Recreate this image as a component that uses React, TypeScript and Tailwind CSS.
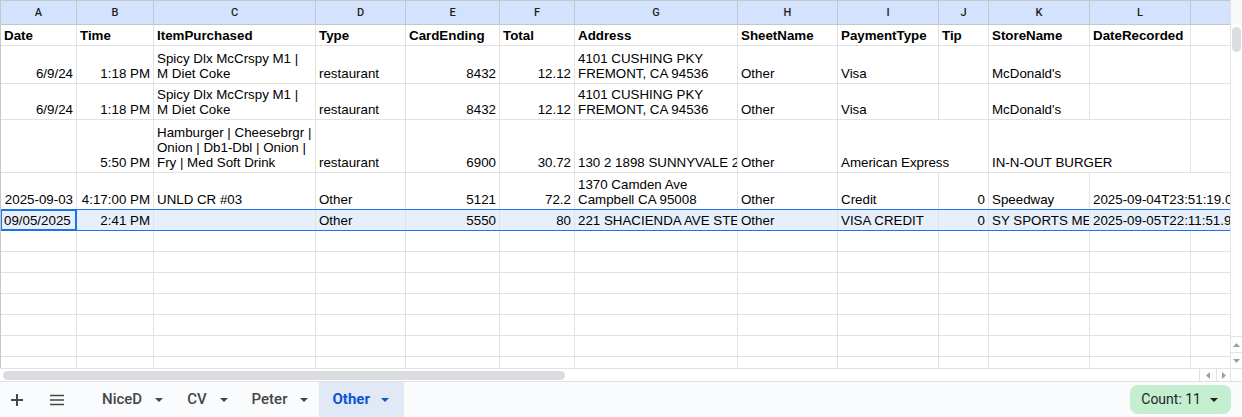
import React from "react";

type Cell = { t?: string | string[]; r?: boolean; ov?: boolean; active?: boolean };
type Row = { h: number; bold?: boolean; sel?: boolean; blueBottom?: boolean; cells: Cell[] };

const COLS = [76, 77, 162, 90, 94, 75, 163, 100, 101, 50, 101, 101];
const LETTERS = ["A", "B", "C", "D", "E", "F", "G", "H", "I", "J", "K", "L"];

const L = (t: string | string[]): Cell => ({ t });
const R = (t: string): Cell => ({ t, r: true });
const E: Cell = {};

const ROWS: Row[] = [
  {
    h: 21,
    bold: true,
    cells: [
      "Date",
      "Time",
      "ItemPurchased",
      "Type",
      "CardEnding",
      "Total",
      "Address",
      "SheetName",
      "PaymentType",
      "Tip",
      "StoreName",
      "DateRecorded",
    ].map((s) => L(s)),
  },
  {
    h: 38,
    cells: [
      R("6/9/24"),
      R("1:18 PM"),
      L(["Spicy Dlx McCrspy M1 |", "M Diet Coke"]),
      L("restaurant"),
      R("8432"),
      R("12.12"),
      L(["4101 CUSHING PKY", "FREMONT, CA 94536"]),
      L("Other"),
      L("Visa"),
      E,
      L("McDonald's"),
      E,
    ],
  },
  {
    h: 36,
    cells: [
      R("6/9/24"),
      R("1:18 PM"),
      L(["Spicy Dlx McCrspy M1 |", "M Diet Coke"]),
      L("restaurant"),
      R("8432"),
      R("12.12"),
      L(["4101 CUSHING PKY", "FREMONT, CA 94536"]),
      L("Other"),
      L("Visa"),
      E,
      L("McDonald's"),
      E,
    ],
  },
  {
    h: 53,
    cells: [
      E,
      R("5:50 PM"),
      L(["Hamburger | Cheesebrgr |", "Onion | Db1-Dbl | Onion |", "Fry | Med Soft Drink"]),
      L("restaurant"),
      R("6900"),
      R("30.72"),
      L("130 2 1898 SUNNYVALE 2"),
      L("Other"),
      { t: "American Express", ov: true },
      E,
      { t: "IN-N-OUT BURGER", ov: true },
      E,
    ],
  },
  {
    h: 37,
    blueBottom: true,
    cells: [
      R("2025-09-03"),
      R("4:17:00 PM"),
      L("UNLD CR #03"),
      L("Other"),
      R("5121"),
      R("72.2"),
      L(["1370 Camden Ave", "Campbell CA 95008"]),
      L("Other"),
      L("Credit"),
      R("0"),
      L("Speedway"),
      { t: "2025-09-04T23:51:19.000Z", ov: true },
    ],
  },
  {
    h: 21,
    sel: true,
    blueBottom: true,
    cells: [
      { t: "09/05/2025", active: true },
      R("2:41 PM"),
      E,
      L("Other"),
      R("5550"),
      R("80"),
      L("221 SHACIENDA AVE STE"),
      L("Other"),
      L("VISA CREDIT"),
      R("0"),
      L("SY SPORTS MED"),
      { t: "2025-09-05T22:11:51.900Z", ov: true },
    ],
  },
];

function GridCell({ c, w, bold }: { c: Cell; w: number; bold?: boolean }) {
  const lines = c.t === undefined ? [] : Array.isArray(c.t) ? c.t : [c.t];
  const clip = !c.ov && !c.active;
  return (
    <div
      className={
        "relative flex shrink-0 flex-col justify-end px-[3px] pb-[2px] " +
        (c.ov ? "" : "border-r border-[#e2e2e2] ") +
        (clip ? "overflow-hidden " : "") +
        (c.r ? "items-end " : "items-start ") +
        (bold ? "font-bold " : "")
      }
      style={{ width: w }}
    >
      {lines.map((l, i) => (
        <div key={i} className="whitespace-nowrap leading-[normal]">
          {l}
        </div>
      ))}
      {c.active && (
        <div className="pointer-events-none absolute left-[-1px] top-[-1px] h-[22px] w-[77px] border-2 border-[#1a73e8]" />
      )}
    </div>
  );
}

function DataRow({ row }: { row: Row }) {
  return (
    <div
      className={
        "flex shrink-0 border-b " +
        (row.blueBottom ? "border-[#1a73e8] " : "border-[#e2e2e2] ") +
        (row.sel ? "bg-[#e7effd]" : "")
      }
      style={{ height: row.h }}
    >
      {COLS.map((w, i) => (
        <GridCell key={i} c={row.cells[i]} w={w} bold={row.bold} />
      ))}
      <div className="flex-1" />
    </div>
  );
}

function EmptyRow() {
  return (
    <div className="flex h-[21px] shrink-0 border-b border-[#e2e2e2]">
      {COLS.map((w, i) => (
        <div key={i} className="shrink-0 border-r border-[#e2e2e2]" style={{ width: w }} />
      ))}
      <div className="flex-1" />
    </div>
  );
}

function Caret() {
  return (
    <svg width="8" height="4" viewBox="0 0 8 4" className="shrink-0">
      <polygon points="0,0 8,0 4,4" fill="currentColor" />
    </svg>
  );
}

function Tab({ name, active }: { name: string; active?: boolean }) {
  return (
    <div
      className={
        "flex h-full items-center pl-[13px] " +
        (active
          ? "gap-[11px] pr-[15px] bg-[#e1e9f7] text-[#0b57d0] font-bold"
          : "gap-[13px] pr-[11px] text-[#444746] font-medium")
      }
    >
      <span className="text-[15px] leading-none">{name}</span>
      <Caret />
    </div>
  );
}

export default function App() {
  return (
    <div
      className="h-[417px] w-[1242px] overflow-hidden bg-white text-[13.333px] text-black"
      style={{ fontFamily: '"Liberation Sans", Arial, sans-serif' }}
    >
      <div className="flex h-[368px]">
        <div className="flex h-full w-[1230px] flex-col overflow-hidden border-l border-[#c4c7c5]">
          <div
            className="flex h-[25px] shrink-0 border-b border-t border-[#c4c7c5] bg-[#d3e3fd] text-[11px] font-medium text-[#1f1f1f]"
            style={{ fontFamily: "Roboto, Arial, sans-serif" }}
          >
            {COLS.map((w, i) => (
              <div
                key={i}
                className="shrink-0 border-r border-[#c4c7c5] text-center leading-[23px]"
                style={{ width: w }}
              >
                {LETTERS[i]}
              </div>
            ))}
            <div className="flex-1" />
          </div>
          {ROWS.map((r, i) => (
            <DataRow key={i} row={r} />
          ))}
          {Array.from({ length: 8 }).map((_, i) => (
            <EmptyRow key={i} />
          ))}
        </div>
        <div className="flex w-[12px] flex-col border-l border-[#e2e2e2]">
          <div className="h-[25px] shrink-0 bg-[#f8f9fa]" />
          <div className="flex-1 pl-[1px] pt-[2px]">
            <div className="h-[25px] w-[9px] rounded-full bg-[#dadce0]" />
          </div>
          <div className="flex h-[16px] items-center justify-center border-t border-[#e2e2e2] text-[#9aa0a6]">
            <svg width="7" height="4" viewBox="0 0 7 4">
              <polygon points="0,4 7,4 3.5,0" fill="currentColor" />
            </svg>
          </div>
          <div className="flex h-[16px] items-center justify-center border-t border-[#e2e2e2] text-[#9aa0a6]">
            <svg width="7" height="4" viewBox="0 0 7 4">
              <polygon points="0,0 7,0 3.5,4" fill="currentColor" />
            </svg>
          </div>
        </div>
      </div>
      <div className="flex h-[14px] border-b border-t border-[#e2e2e2]">
        <div className="flex w-[1199px] items-center pl-[3px]">
          <div className="h-[9px] w-[562px] rounded-full bg-[#dadce0]" />
        </div>
        <div className="flex w-[17px] items-center justify-center border-l border-[#e2e2e2] text-[#9aa0a6]">
          <svg width="4" height="7" viewBox="0 0 4 7">
            <polygon points="4,0 4,7 0,3.5" fill="currentColor" />
          </svg>
        </div>
        <div className="flex w-[15px] items-center justify-center border-l border-r border-[#e2e2e2] text-[#9aa0a6]">
          <svg width="4" height="7" viewBox="0 0 4 7">
            <polygon points="0,0 0,7 4,3.5" fill="currentColor" />
          </svg>
        </div>
        <div className="flex-1" />
      </div>
      <div
        className="flex h-[35px] items-center bg-[#f9fbfd]"
        style={{ fontFamily: "Roboto, Arial, sans-serif" }}
      >
        <div className="flex w-[34px] items-center justify-center text-[#444746]">
          <svg width="14" height="14" viewBox="0 0 14 14">
            <path d="M7 1v12M1 7h12" stroke="currentColor" strokeWidth="2" />
          </svg>
        </div>
        <div className="ml-[6px] flex w-[34px] items-center justify-center text-[#444746]">
          <svg width="14" height="12" viewBox="0 0 14 12">
            <path d="M0 1.5h14M0 6h14M0 10.5h14" stroke="currentColor" strokeWidth="1.6" />
          </svg>
        </div>
        <div className="ml-[15px] flex h-full items-center">
          <Tab name="NiceD" />
          <Tab name="CV" />
          <Tab name="Peter" />
          <Tab name="Other" active />
        </div>
        <div className="ml-auto mr-[11px] flex h-[29px] items-center gap-[9px] rounded-[8px] bg-[#c4eed0] pl-[11px] pr-[13px] text-[14px] text-[#1f1f1f]">
          <span>Count: 11</span>
          <Caret />
        </div>
      </div>
    </div>
  );
}
